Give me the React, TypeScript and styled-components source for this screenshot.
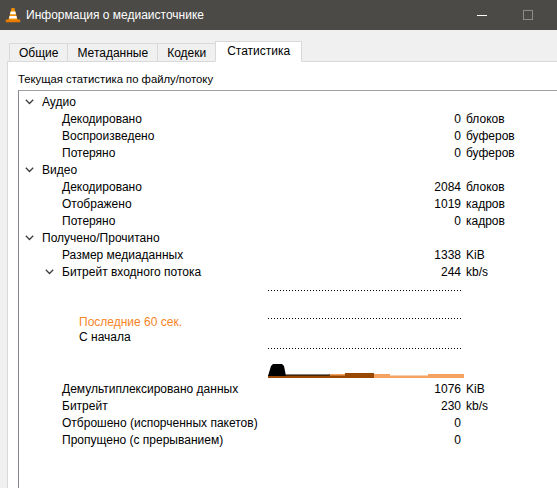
import { Fragment } from "react";
import styled, { createGlobalStyle } from "styled-components";

const GlobalStyle = createGlobalStyle`
  html, body {
    margin: 0;
    padding: 0;
    overflow: hidden;
    background: #f0f0f0;
  }
  body {
    font-family: "Liberation Sans", Arial, sans-serif;
    font-size: 12px;
    color: #000;
  }
`;

type StatRow = {
  label: string;
  level: number;
  value?: string;
  unit?: string;
  expanded?: boolean;
  graph?: boolean;
};

const rows: StatRow[] = [
  { label: "Аудио", level: 0, expanded: true },
  { label: "Декодировано", level: 1, value: "0", unit: "блоков" },
  { label: "Воспроизведено", level: 1, value: "0", unit: "буферов" },
  { label: "Потеряно", level: 1, value: "0", unit: "буферов" },
  { label: "Видео", level: 0, expanded: true },
  { label: "Декодировано", level: 1, value: "2084", unit: "блоков" },
  { label: "Отображено", level: 1, value: "1019", unit: "кадров" },
  { label: "Потеряно", level: 1, value: "0", unit: "кадров" },
  { label: "Получено/Прочитано", level: 0, expanded: true },
  { label: "Размер медиаданных", level: 1, value: "1338", unit: "KiB" },
  { label: "Битрейт входного потока", level: 1, value: "244", unit: "kb/s", expanded: true, graph: true },
  { label: "Демультиплексировано данных", level: 1, value: "1076", unit: "KiB" },
  { label: "Битрейт", level: 1, value: "230", unit: "kb/s" },
  { label: "Отброшено (испорченных пакетов)", level: 1, value: "0" },
  { label: "Пропущено (с прерыванием)", level: 1, value: "0" },
];

const tabs = ["Общие", "Метаданные", "Кодеки", "Статистика"];

// value column ends at this x inside the tree, whatever the indent
const LABEL_SPAN = 382;

const VlcIcon = () => (
  <svg width="16" height="16" viewBox="0 0 16 16">
    <path d="M1.5 12.5 h13 a0.8 0.8 0 0 1 0.8 0.8 v1.2 a0.8 0.8 0 0 1 -0.8 0.8 h-13 a0.8 0.8 0 0 1 -0.8 -0.8 v-1.2 a0.8 0.8 0 0 1 0.8 -0.8z" fill="#e97b00" />
    <path d="M6.6 1 h2.8 l3.2 12 h-9.2z" fill="#f39200" />
    <path d="M5.7 4.6 h4.6 l0.7 2.6 h-6z" fill="#fff" />
    <path d="M4.6 8.9 h6.8 l0.7 2.5 h-8.2z" fill="#fff" />
  </svg>
);

const Chevron = () => (
  <svg width="9" height="6" viewBox="0 0 9 6">
    <polyline points="0.8,0.8 4.5,4.5 8.2,0.8" fill="none" stroke="#3c3c3c" strokeWidth="1.3" />
  </svg>
);

const BitrateGraph = () => (
  <svg width="200" height="100" viewBox="0 0 200 100">
    {[10, 38, 68].map((y) => (
      <line key={y} x1="0" x2="193" y1={y + 0.5} y2={y + 0.5} stroke="#000" strokeWidth="1" strokeDasharray="1 2" />
    ))}
    <rect x="0" y="95" width="77" height="3" fill="#9a4700" />
    <rect x="61" y="94" width="16" height="1.5" fill="#f2a15e" />
    <rect x="77" y="93" width="29" height="5" fill="#9a4700" />
    <rect x="106" y="94" width="16" height="4" fill="#f4a261" />
    <rect x="122" y="95.5" width="38" height="2.5" fill="#f4a261" />
    <rect x="160" y="94" width="36" height="4" fill="#f4a261" />
    <polygon points="0,96 3,86 5,84 14,84 16,86 18,96" fill="#000" />
    <rect x="18" y="94.5" width="44" height="1" fill="#000" />
  </svg>
);

export default function App() {
  return (
    <Window>
      <GlobalStyle />
      <TitleBar>
        <TitleIcon>
          <VlcIcon />
        </TitleIcon>
        <TitleText>Информация о медиаисточнике</TitleText>
        <Controls>
          <ControlButton>
            <MinimizeGlyph />
          </ControlButton>
          <ControlButton>
            <MaximizeGlyph />
          </ControlButton>
          <ControlButton />
        </Controls>
      </TitleBar>
      <Body>
        <TabBar>
          {tabs.map((t, i) => (
            <Tab key={t} $active={i === tabs.length - 1}>
              {t}
            </Tab>
          ))}
        </TabBar>
        <Pane>
          <Caption>Текущая статистика по файлу/потоку</Caption>
          <Tree>
            {rows.map((r, i) => (
              <Fragment key={i}>
                <Row $level={r.level}>
                  <Label $level={r.level}>
                    <Toggle>{r.expanded && <Chevron />}</Toggle>
                    {r.label}
                  </Label>
                  <Value>{r.value}</Value>
                  <Unit>{r.unit}</Unit>
                </Row>
                {r.graph && (
                  <GraphRow>
                    <Legend>
                      <LegendItem $color="#f5851f">Последние 60 сек.</LegendItem>
                      <LegendItem $color="#000">С начала</LegendItem>
                    </Legend>
                    <BitrateGraph />
                  </GraphRow>
                )}
              </Fragment>
            ))}
          </Tree>
        </Pane>
      </Body>
    </Window>
  );
}

const Window = styled.div`
  width: 597px;
  height: 520px;
  display: flex;
  flex-direction: column;
`;

const TitleBar = styled.div`
  height: 30px;
  background: #4b4a47;
  display: flex;
  align-items: center;
  flex-shrink: 0;
`;

const TitleIcon = styled.div`
  width: 16px;
  height: 16px;
  margin: 0 5px 0 5px;
  display: flex;
`;

const TitleText = styled.div`
  color: #fff;
  font-size: 12px;
  flex: 1;
`;

const Controls = styled.div`
  display: flex;
  height: 100%;
`;

const ControlButton = styled.div`
  width: 46px;
  height: 100%;
  display: flex;
  align-items: center;
  justify-content: center;
`;

const MinimizeGlyph = styled.div`
  width: 10px;
  height: 1px;
  background: #fff;
`;

const MaximizeGlyph = styled.div`
  width: 8px;
  height: 8px;
  border: 1px solid #8c8b89;
`;

const Body = styled.div`
  flex: 1;
  background: #f0f0f0;
  padding: 11px 0 0 7px;
  display: flex;
  flex-direction: column;
`;

const TabBar = styled.div`
  display: flex;
  align-items: flex-end;
  padding-left: 3px;
  position: relative;
  z-index: 1;
`;

const Tab = styled.div<{ $active: boolean }>`
  box-sizing: border-box;
  height: ${({ $active }) => ($active ? "21px" : "18px")};
  padding: 0 ${({ $active }) => ($active ? "11px" : "9px")};
  padding-bottom: ${({ $active }) => ($active ? "2px" : "0")};
  display: flex;
  align-items: center;
  background: ${({ $active }) => ($active ? "#fff" : "#f0f0f0")};
  border: 1px solid #d9d9d9;
  border-bottom: ${({ $active }) => ($active ? "1px solid #fff" : "none")};
  margin-left: -1px;
  margin-bottom: ${({ $active }) => ($active ? "-1px" : "0")};
  white-space: nowrap;
`;

const Pane = styled.div`
  flex: 1;
  background: #fff;
  border: 1px solid #d9d9d9;
  padding: 9px 0 0 10px;
`;

const Caption = styled.div`
  font-size: 11.3px;
  line-height: 16px;
  margin-bottom: 3px;
`;

const Tree = styled.div`
  border-top: 1px solid #a0a0a0;
  border-left: 1px solid #828790;
  padding-top: 2px;
  height: 100%;
`;

const Row = styled.div<{ $level: number }>`
  display: flex;
  align-items: center;
  height: 17px;
  padding-left: ${({ $level }) => $level * 20}px;
  white-space: nowrap;
`;

const Label = styled.div<{ $level: number }>`
  width: ${({ $level }) => LABEL_SPAN - $level * 20}px;
  display: flex;
  align-items: center;
`;

const Toggle = styled.div`
  width: 23px;
  padding-left: 6px;
  box-sizing: border-box;
  display: flex;
  align-items: center;
`;

const Value = styled.div`
  width: 60px;
  text-align: right;
  margin-right: 5px;
`;

const Unit = styled.div`
  width: 108px;
`;

const GraphRow = styled.div`
  display: flex;
  height: 100px;
`;

const Legend = styled.div`
  width: 189px;
  padding: 35px 0 0 60px;
`;

const LegendItem = styled.div<{ $color: string }>`
  color: ${({ $color }) => $color};
  line-height: 15px;
`;
